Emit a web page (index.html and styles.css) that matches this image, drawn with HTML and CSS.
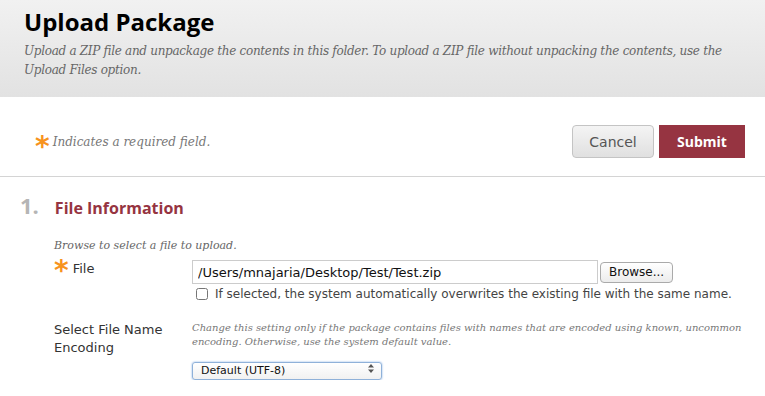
FILE: index.html
```html
<!DOCTYPE html>
<html lang="en">
<head>
  <meta charset="UTF-8">
  <title>Upload Package</title>
  <link rel="stylesheet" href="styles.css">
</head>
<body>
  <div class="page-header">
    <h1>Upload Package</h1>
    <p>Upload a ZIP file and unpackage the contents in this folder. To upload a ZIP file without unpacking the contents, use the Upload Files option.</p>
  </div>

  <div class="submit-row">
    <p class="required-note"><span class="req">*</span>Indicates a required field.</p>
    <div class="buttons">
      <button class="btn-cancel">Cancel</button>
      <button class="btn-submit">Submit</button>
    </div>
  </div>

  <div class="step">
    <div class="step-title">
      <span class="step-num">1.</span>
      <h2>File Information</h2>
    </div>

    <p class="step-help">Browse to select a file to upload.</p>

    <div class="field">
      <div class="label"><span class="req">*</span>File</div>
      <div class="value">
        <div class="file-row">
          <input type="text" class="file-path" value="/Users/mnajaria/Desktop/Test/Test.zip">
          <button class="btn-browse">Browse...</button>
        </div>
        <label class="check"><input type="checkbox"> If selected, the system automatically overwrites the existing file with the same name.</label>
      </div>
    </div>

    <div class="field encoding">
      <div class="label">Select File Name Encoding</div>
      <div class="value">
        <p class="field-help">Change this setting only if the package contains files with names that are encoded using known, uncommon encoding. Otherwise, use the system default value.</p>
        <div class="select-wrap">
          <select class="enc-select">
            <option>Default (UTF-8)</option>
          </select>
          <svg class="select-arrows" width="6" height="9" viewBox="0 0 6 9">
            <path d="M0 3.5 L3 0 L6 3.5 Z M0 5.5 L3 9 L6 5.5 Z" fill="#555"/>
          </svg>
        </div>
      </div>
    </div>
  </div>
</body>
</html>
```

FILE: styles.css
```css
body {
  margin: 0;
  font-family: "DejaVu Sans", sans-serif;
  background-color: white;
  color: #333;
}

.page-header {
  background: linear-gradient(#f1f1f1, #e2e2e2);
  padding: 6px 16px 0 24px;
  height: 91px;
}

.page-header h1 {
  font-family: "Open Sans", sans-serif;
  font-size: 24px;
  font-weight: bold;
  color: #000;
  margin: 0;
  line-height: 32px;
}

.page-header p {
  font-family: "DejaVu Serif", serif;
  font-style: italic;
  font-size: 12px;
  letter-spacing: -0.3px;
  line-height: 19px;
  color: #666;
  margin: 4px 0 0 0;
}

.submit-row {
  display: flex;
  justify-content: space-between;
  align-items: center;
  padding: 28px 20px 18px 35px;
  border-bottom: 1px solid #d4d4d4;
}

.required-note {
  margin: 0;
  font-family: "DejaVu Serif", serif;
  font-style: italic;
  font-size: 12px;
  color: #777;
  display: flex;
  align-items: center;
}

.req {
  color: #f7931e;
  font-family: "DejaVu Sans", sans-serif;
  font-style: normal;
  font-weight: bold;
  font-size: 28px;
  line-height: 14px;
  height: 14px;
  margin-right: 3px;
  position: relative;
  top: 5px;
}

.buttons {
  display: flex;
  gap: 5px;
}

.btn-cancel {
  width: 82px;
  height: 33px;
  background: linear-gradient(#f4f4f4, #e0e0e0);
  border: 1px solid #c4c4c4;
  border-radius: 4px;
  font-family: "DejaVu Sans", sans-serif;
  font-size: 14px;
  color: #555;
}

.btn-submit {
  width: 86px;
  height: 33px;
  background-color: #963441;
  border: none;
  font-family: "Open Sans", sans-serif;
  font-weight: bold;
  font-size: 14px;
  color: white;
}

.step {
  padding: 13px 0 0 20px;
}

.step-title {
  display: flex;
  align-items: baseline;
  gap: 16px;
}

.step-num {
  font-family: "Open Sans", sans-serif;
  font-weight: bold;
  font-size: 22px;
  color: #b5b5b5;
}

.step-title h2 {
  font-family: "Open Sans", sans-serif;
  font-weight: bold;
  font-size: 16px;
  color: #963441;
  margin: 0;
}

.step-help {
  font-family: "DejaVu Serif", serif;
  font-style: italic;
  font-size: 11px;
  color: #666;
  margin: 19px 0 8px 34px;
}

.field {
  display: flex;
  margin-left: 34px;
}

.label {
  width: 138px;
  font-size: 13px;
  line-height: 18px;
  color: #333;
  display: flex;
  align-items: flex-start;
}

.field .label .req {
  top: 4px;
  margin-right: 4px;
}

.value {
  flex: 1;
}

.file-row {
  display: flex;
  align-items: center;
  gap: 2px;
}

.file-path {
  width: 394px;
  height: 22px;
  border: 1px solid #ccc;
  padding: 0 5px;
  font-family: "DejaVu Sans", sans-serif;
  font-size: 13px;
  color: #111;
  margin: 0;
}

.btn-browse {
  height: 21px;
  padding: 0 8px;
  background: linear-gradient(#fff, #ececec);
  border: 1px solid #aaa;
  border-radius: 4px;
  font-family: "DejaVu Sans", sans-serif;
  font-size: 12px;
  color: #111;
}

.check {
  display: flex;
  align-items: center;
  margin: 3px 0 0 4px;
  font-size: 12px;
  color: #444;
}

.check input {
  margin: 0 7px 0 0;
  width: 12px;
  height: 12px;
}

.encoding {
  margin-top: 20px;
}

.field-help {
  font-family: "DejaVu Serif", serif;
  font-style: italic;
  font-size: 10px;
  line-height: 14px;
  color: #777;
  margin: 0 0 10px 0;
}

.select-wrap {
  position: relative;
  width: 190px;
}

.enc-select {
  appearance: none;
  width: 190px;
  height: 18px;
  padding: 0 0 0 8px;
  font-family: "DejaVu Sans", sans-serif;
  font-size: 11px;
  color: #111;
  border: 1px solid #8fb1d9;
  border-radius: 3px;
  box-shadow: 0 0 2px #7aa7e0;
  background: linear-gradient(#fff, #f1f1f1);
}

.select-arrows {
  position: absolute;
  right: 8px;
  top: 5px;
}
```
